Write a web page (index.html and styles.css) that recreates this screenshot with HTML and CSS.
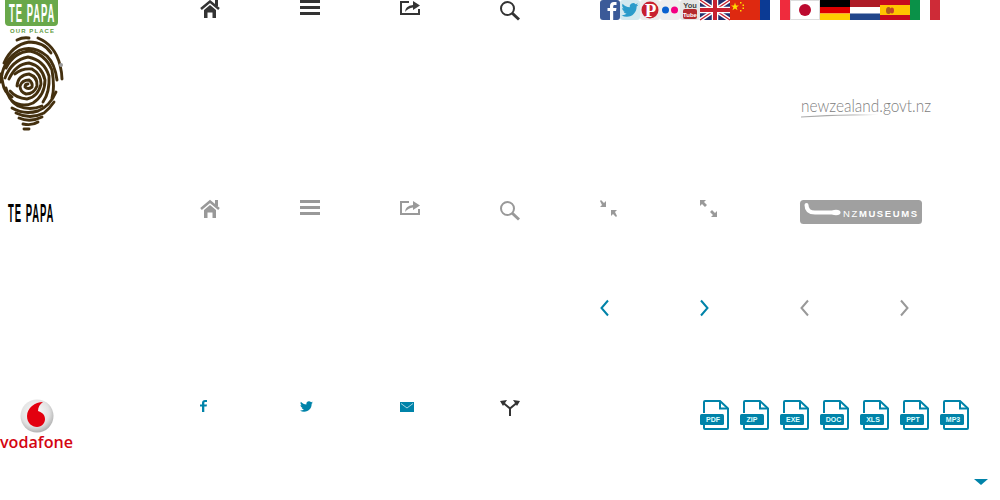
FILE: index.html
```html
<!DOCTYPE html>
<html lang="en">
<head>
<meta charset="utf-8">
<title>Sprite sheet</title>
<link rel="stylesheet" href="styles.css">
</head>
<body>
<main class="sheet">

<svg class="cell c1 r1 tall" viewBox="0 0 100 200">
  <path d="M5 0H58V22Q58 26 54 26H9Q5 26 5 22Z" fill="#69a84a"/>
  <text class="logo-type" transform="translate(9 22) scale(.38 1)" font-size="25" letter-spacing="2.500" fill="#fff">TE PAPA</text>
  <text class="place" x="10" y="33" font-size="6" textLength="44" fill="#5f9c42">OUR PLACE</text>
  <g fill="none" stroke="#44300f" stroke-width="2.900" stroke-linecap="round">
    <path d="M17 40Q23 37 29 38"/>
    <path d="M38 38Q55 45 60 65Q62 73 62 79"/>
    <path d="M4 63Q12 45 29 42Q44 42 51 53"/>
    <path d="M1 82Q2 60 20 50Q34 45 47 56Q55 64 57 80"/>
    <path d="M6 68Q14 52 30 51Q45 54 52 70Q55 88 52 98"/>
    <path d="M5 78Q12 60 28 57Q44 60 49 76Q50 92 43 102"/>
    <path d="M9 79Q16 64 29 63Q42 66 45 80Q45 95 33 103Q22 108 12 101"/>
    <path d="M15 74Q22 68 32 69Q41 74 41 84Q38 97 27 99Q16 98 10 91"/>
    <path d="M17 86Q18 75 29 74Q38 77 37 86Q34 94 26 94Q20 92 20 86Q22 80 29 80Q33 83 32 87Q28 90 25 87Q25 84 28 84"/>
    <path d="M1 74L3 84Q4 92 12 97"/>
    <path d="M6 88Q8 100 18 106Q30 111 42 106"/>
    <path d="M12 108Q24 115 38 111Q50 106 56 92"/>
    <path d="M16 113Q30 120 44 113Q50 108 54 102"/>
    <path d="M19 118Q30 123 42 117"/>
    <path d="M23 124Q32 126 38 122"/>
    <path d="M24 129H29"/>
  </g>
  <circle cx="61" cy="65" r="2" fill="#999"/>
</svg>

<svg class="cell c3 r1" viewBox="200 0 100 100">
  <path d="M201 9L210 1.500L219 9" fill="none" stroke="#333" stroke-width="2.500"/>
  <path d="M215 0H218V6H215Z" fill="#333"/>
  <path d="M204 10L210 5L216 10V18H212.500V12.500H207.500V18H204Z" fill="#333"/>
</svg>
<svg class="cell c4 r1" viewBox="300 0 100 100">
  <path d="M300 0H320V3H300ZM300 6H320V9H300ZM300 12H320V15H300Z" fill="#333"/>
</svg>
<svg class="cell c5 r1" viewBox="400 0 100 100">
  <path d="M409 2H401V14H419V9" fill="none" stroke="#333" stroke-width="2"/>
  <path d="M405 12Q405 6 413 5V1L420 5.500L413 10V7.500Q408 8 405 12Z" fill="#333"/>
</svg>
<svg class="cell c6 r1" viewBox="500 0 100 100">
  <circle cx="507.500" cy="8.500" r="6.500" fill="none" stroke="#333" stroke-width="2"/>
  <path d="M512 13L519 19.500" stroke="#333" stroke-width="3"/>
</svg>

<svg class="cell c7 r1" viewBox="600 0 100 100">
  <rect x="600" y="0" width="20" height="20" rx="3" fill="#3b5a98"/>
  <path d="M610 20V11H607.500V8H610V6C610 3.500 611.500 2 614 2H616.500V5H614.800C613.600 5 613.200 5.500 613.200 6.500V8H616.500L616 11H613.200V20Z" fill="#fff"/>
  <rect x="620" y="0" width="20" height="20" rx="3" fill="#d3e9ef"/>
  <path transform="translate(621.500 1.500) scale(.7)" d="M23.950 4.570a10 10 0 0 1-2.820.770 4.960 4.960 0 0 0 2.160-2.720c-.950.550-2 .950-3.120 1.180a4.920 4.920 0 0 0-8.380 4.480C7.690 8.100 4.070 6.130 1.640 3.160a4.820 4.820 0 0 0-.670 2.480c0 1.710.870 3.210 2.190 4.100a4.900 4.900 0 0 1-2.230-.620v.060c0 2.390 1.700 4.380 3.950 4.830a5 5 0 0 1-2.210.080 4.940 4.940 0 0 0 4.600 3.420A9.870 9.870 0 0 1 0 19.540a14 14 0 0 0 7.560 2.210c9.050 0 14-7.500 14-13.980l-.020-.640a9.940 9.940 0 0 0 2.410-2.560z" fill="#2b9ccb"/>
  <rect x="640" y="0" width="20" height="20" rx="3" fill="#ececec"/>
  <circle cx="650" cy="10" r="8.500" fill="#c8202f"/>
  <text class="pin" x="650.500" y="17" font-size="19" text-anchor="middle" fill="#fff">P</text>
  <rect x="660" y="0" width="20" height="20" rx="3" fill="#efefef"/>
  <circle cx="665.500" cy="10" r="3.500" fill="#0b62d0"/>
  <circle cx="674.500" cy="10" r="3.500" fill="#f40083"/>
  <rect x="680" y="0" width="20" height="20" rx="3" fill="#e6e6e6"/>
  <text class="yt" x="690" y="8" font-size="7.500" text-anchor="middle" fill="#444">You</text>
  <rect x="683" y="9" width="14" height="10" rx="2" fill="#b52a2e"/>
  <text class="yt" x="690" y="16.500" font-size="6" text-anchor="middle" fill="#fff">Tube</text>
</svg>

<svg class="cell c8 r1 wide" viewBox="700 0 300 100">
  <rect x="700" y="0" width="30" height="20" fill="#24306e"/>
  <path d="M700 0L730 20M730 0L700 20" stroke="#fff" stroke-width="4"/>
  <path d="M700 0L730 20M730 0L700 20" stroke="#c8202f" stroke-width="1.300"/>
  <path d="M715 0V20M700 10H730" stroke="#fff" stroke-width="6.500"/>
  <path d="M715 0V20M700 10H730" stroke="#c8202f" stroke-width="4"/>

  <rect x="730" y="0" width="30" height="20" fill="#de2910"/>
  <path d="M735 2.500L736 5.500H739L736.600 7.300L737.500 10.200L735 8.400L732.500 10.200L733.400 7.300L731 5.500H734Z" fill="#ffde00"/>
  <path d="M740 2h1.500v1.500H740ZM742.500 4.500h1.500V6h-1.500ZM742.500 7.500h1.500V9h-1.500ZM740 10h1.500v1.500H740Z" fill="#ffde00"/>

  <rect x="760" y="0" width="10" height="20" fill="#0b3a94"/>
  <rect x="770" y="0" width="10" height="20" fill="#fff"/>
  <rect x="780" y="0" width="10" height="20" fill="#ef2b3d"/>

  <rect x="790.500" y="0.500" width="29" height="19" fill="#fff" stroke="#ddd"/>
  <circle cx="805" cy="10" r="6" fill="#bc0a2f"/>

  <rect x="820" y="0" width="30" height="7" fill="#000"/>
  <rect x="820" y="7" width="30" height="6.500" fill="#dd0000"/>
  <rect x="820" y="13.500" width="30" height="6.500" fill="#ffce00"/>

  <rect x="850" y="0" width="30" height="7" fill="#ae1c28"/>
  <rect x="850" y="7" width="30" height="6.500" fill="#fff"/>
  <rect x="850" y="13.500" width="30" height="6.500" fill="#21468b"/>

  <rect x="880" y="0" width="30" height="20" fill="#c60b1e"/>
  <rect x="880" y="5" width="30" height="10" fill="#ffc400"/>
  <ellipse cx="888.500" cy="10.500" rx="2.500" ry="3.500" fill="#ad5b1f"/>
  <ellipse cx="892" cy="10.500" rx="2" ry="3" fill="#c8402a"/>

  <rect x="910" y="0" width="10" height="20" fill="#0a9148"/>
  <rect x="920" y="0" width="10" height="20" fill="#fff"/>
  <rect x="930" y="0" width="10" height="20" fill="#ce2b37"/>
</svg>

<svg class="cell c9 r2 wide-2" viewBox="800 100 200 100">
  <text class="govt" x="801" y="112" font-size="17.500" textLength="130" lengthAdjust="spacingAndGlyphs" fill="#808080">newzealand.govt.nz</text>
  <path d="M801 116.500Q840 113.500 879 115Q840 114.800 801 117.500Z" fill="#aaa"/>
</svg>

<svg class="cell c1 r3" viewBox="0 200 100 100">
  <text class="logo-type" transform="translate(8 222) scale(.38 1)" font-size="25" letter-spacing="2.500" fill="#000">TE PAPA</text>
</svg>
<svg class="cell c3 r3" viewBox="200 200 100 100">
  <path d="M201 209L210 201.500L219 209" fill="none" stroke="#999" stroke-width="2.500"/>
  <path d="M215 200H218V206H215Z" fill="#999"/>
  <path d="M204 210L210 205L216 210V218H212.500V212.500H207.500V218H204Z" fill="#999"/>
</svg>
<svg class="cell c4 r3" viewBox="300 200 100 100">
  <path d="M300 200H320V203H300ZM300 206H320V209H300ZM300 212H320V215H300Z" fill="#999"/>
</svg>
<svg class="cell c5 r3" viewBox="400 200 100 100">
  <path d="M409 202H401V214H419V209" fill="none" stroke="#999" stroke-width="2"/>
  <path d="M405 212Q405 206 413 205V201L420 205.500L413 210V207.500Q408 208 405 212Z" fill="#999"/>
</svg>
<svg class="cell c6 r3" viewBox="500 200 100 100">
  <circle cx="507.500" cy="208.500" r="6.500" fill="none" stroke="#999" stroke-width="2"/>
  <path d="M512 213L519 219.500" stroke="#999" stroke-width="3"/>
</svg>
<svg class="cell c7 r3" viewBox="600 200 100 100">
  <path d="M600 201L601 200L604 203L606 201V207H600L602 205ZM617 216L616 217L613 214L611 216V210H617L615 212Z" fill="#999"/>
</svg>
<svg class="cell c8 r3" viewBox="700 200 100 100">
  <path d="M700 200H706L704 202L707 205L705 207L702 204L700 206ZM717 217H711L713 215L710 212L712 210L715 213L717 211Z" fill="#999"/>
</svg>
<svg class="cell c9 r3 wide-2" viewBox="800 200 200 100">
  <rect x="800" y="200" width="122" height="24" rx="3.500" fill="#a0a0a0"/>
  <path d="M806.500 205Q806.500 212.500 815 212.500H834" fill="none" stroke="#fff" stroke-width="4" stroke-linecap="round"/>
  <ellipse cx="836" cy="212.500" rx="4.500" ry="2.700" fill="#fff"/>
  <text class="nz" x="843" y="217" font-size="9.500" letter-spacing="1.600" fill="#fff"><tspan class="nz-thin">NZ</tspan>MUSEUMS</text>
</svg>

<svg class="cell c7 r4" viewBox="600 300 100 100">
  <path d="M608 300.500L601.500 308L608 315.500" fill="none" stroke="#0083a9" stroke-width="2"/>
</svg>
<svg class="cell c8 r4" viewBox="700 300 100 100">
  <path d="M701 300.500L707.500 308L701 315.500" fill="none" stroke="#0083a9" stroke-width="2"/>
</svg>
<svg class="cell c9 r4" viewBox="800 300 100 100">
  <path d="M808 300.500L801.500 308L808 315.500" fill="none" stroke="#999" stroke-width="2"/>
</svg>
<svg class="cell c10 r4" viewBox="900 300 100 100">
  <path d="M901 300.500L907.500 308L901 315.500" fill="none" stroke="#999" stroke-width="2"/>
</svg>

<svg class="cell c1 r5" viewBox="0 400 100 100">
  <defs>
    <radialGradient id="vf-ball" cx=".45" cy=".4" r=".65">
      <stop offset="0" stop-color="#fff"/>
      <stop offset=".65" stop-color="#e2e2e2"/>
      <stop offset="1" stop-color="#a5a5a5"/>
    </radialGradient>
  </defs>
  <circle cx="37" cy="416" r="16.500" fill="url(#vf-ball)"/>
  <path d="M43 402C35 402 27 408 27 416C27 423 32 427 37 427C42 427 45 423 45 419C45 414 41 412 38 411C38 407 40 404 43 402Z" fill="#e3000f"/>
  <text class="vf" x="0" y="448" font-size="16.500" textLength="73" lengthAdjust="spacingAndGlyphs" fill="#d40511">vodafone</text>
</svg>
<svg class="cell c3 r5" viewBox="200 400 100 100">
  <path d="M202 412V406.500H200V404.500H202V403C202 401 203.200 400 205 400H207V402H205.500C204.600 402 204.300 402.400 204.300 403V404.500H207L206.600 406.500H204.300V412Z" fill="#0083a9"/>
</svg>
<svg class="cell c4 r5" viewBox="300 400 100 100">
  <path transform="translate(300 400) scale(.54)" d="M23.950 4.570a10 10 0 0 1-2.820.770 4.960 4.960 0 0 0 2.160-2.720c-.950.550-2 .950-3.120 1.180a4.920 4.920 0 0 0-8.380 4.480C7.690 8.100 4.070 6.130 1.640 3.160a4.820 4.820 0 0 0-.670 2.480c0 1.710.870 3.210 2.190 4.100a4.900 4.900 0 0 1-2.230-.620v.060c0 2.390 1.700 4.380 3.950 4.830a5 5 0 0 1-2.210.080 4.940 4.940 0 0 0 4.600 3.420A9.870 9.870 0 0 1 0 19.540a14 14 0 0 0 7.560 2.210c9.050 0 14-7.500 14-13.980l-.020-.640a9.940 9.940 0 0 0 2.410-2.560z" fill="#0083a9"/>
</svg>
<svg class="cell c5 r5" viewBox="400 400 100 100">
  <rect x="400" y="402" width="14" height="10" fill="#0083a9"/>
  <path d="M401 403.500L407 408L413 403.500" fill="none" stroke="#cfe8f0" stroke-width=".8"/>
</svg>
<svg class="cell c6 r5" viewBox="500 400 100 100">
  <path d="M510 416V408.500L504 403.500M510 408.500L516 403.500" fill="none" stroke="#333" stroke-width="2"/>
  <path d="M500 401L507 400L503 406ZM520 401L513 400L517 406Z" fill="#333"/>
</svg>

<svg class="cell c8 r5 wide" viewBox="700 400 300 100">
  <g class="file"><path d="M704 413V402Q704 401 705 401H720L728 408.500V428Q728 429 727 429H705Q704 429 704 428V425" fill="none" stroke="#0083a9" stroke-width="2"/><path d="M720 401V408.500H728" fill="none" stroke="#0083a9" stroke-width="2"/><rect x="700" y="414" width="24" height="11" rx="1.500" fill="#0083a9"/><text class="ft" x="713" y="422" font-size="7" text-anchor="middle" fill="#dff">PDF</text></g>
  <g class="file"><path d="M744 413V402Q744 401 745 401H760L768 408.500V428Q768 429 767 429H745Q744 429 744 428V425" fill="none" stroke="#0083a9" stroke-width="2"/><path d="M760 401V408.500H768" fill="none" stroke="#0083a9" stroke-width="2"/><rect x="740" y="414" width="24" height="11" rx="1.500" fill="#0083a9"/><text class="ft" x="752" y="422" font-size="7" text-anchor="middle" fill="#dff">ZIP</text></g>
  <g class="file"><path d="M784 413V402Q784 401 785 401H800L808 408.500V428Q808 429 807 429H785Q784 429 784 428V425" fill="none" stroke="#0083a9" stroke-width="2"/><path d="M800 401V408.500H808" fill="none" stroke="#0083a9" stroke-width="2"/><rect x="780" y="414" width="24" height="11" rx="1.500" fill="#0083a9"/><text class="ft" x="793" y="422" font-size="7" text-anchor="middle" fill="#dff">EXE</text></g>
  <g class="file"><path d="M824 413V402Q824 401 825 401H840L848 408.500V428Q848 429 847 429H825Q824 429 824 428V425" fill="none" stroke="#0083a9" stroke-width="2"/><path d="M840 401V408.500H848" fill="none" stroke="#0083a9" stroke-width="2"/><rect x="820" y="414" width="24" height="11" rx="1.500" fill="#0083a9"/><text class="ft" x="833.500" y="422" font-size="7" text-anchor="middle" fill="#dff">DOC</text></g>
  <g class="file"><path d="M864 413V402Q864 401 865 401H880L888 408.500V428Q888 429 887 429H865Q864 429 864 428V425" fill="none" stroke="#0083a9" stroke-width="2"/><path d="M880 401V408.500H888" fill="none" stroke="#0083a9" stroke-width="2"/><rect x="860" y="414" width="24" height="11" rx="1.500" fill="#0083a9"/><text class="ft" x="873" y="422" font-size="7" text-anchor="middle" fill="#dff">XLS</text></g>
  <g class="file"><path d="M904 413V402Q904 401 905 401H920L928 408.500V428Q928 429 927 429H905Q904 429 904 428V425" fill="none" stroke="#0083a9" stroke-width="2"/><path d="M920 401V408.500H928" fill="none" stroke="#0083a9" stroke-width="2"/><rect x="900" y="414" width="24" height="11" rx="1.500" fill="#0083a9"/><text class="ft" x="913" y="422" font-size="7" text-anchor="middle" fill="#dff">PPT</text></g>
  <g class="file"><path d="M944 413V402Q944 401 945 401H960L968 408.500V428Q968 429 967 429H945Q944 429 944 428V425" fill="none" stroke="#0083a9" stroke-width="2"/><path d="M960 401V408.500H968" fill="none" stroke="#0083a9" stroke-width="2"/><rect x="940" y="414" width="24" height="11" rx="1.500" fill="#0083a9"/><text class="ft" x="953" y="422" font-size="7" text-anchor="middle" fill="#dff">MP3</text></g>
  <path d="M974 479H988L981 485Z" fill="#0083a9"/>
</svg>

</main>
</body>
</html>
```
FILE: styles.css
```css
html, body {
  margin: 0;
  padding: 0;
  background: #fff;
}

.sheet {
  display: grid;
  grid-template-columns: repeat(10, 100px);
  grid-template-rows: repeat(5, 100px);
  width: 1000px;
  height: 500px;
  overflow: hidden;
}

.cell { display: block; width: 100%; height: 100%; overflow: visible; }

.c1 { grid-column-start: 1; }
.c3 { grid-column-start: 3; }
.c4 { grid-column-start: 4; }
.c5 { grid-column-start: 5; }
.c6 { grid-column-start: 6; }
.c7 { grid-column-start: 7; }
.c8 { grid-column-start: 8; }
.c9 { grid-column-start: 9; }
.c10 { grid-column-start: 10; }

.r1 { grid-row-start: 1; }
.r2 { grid-row-start: 2; }
.r3 { grid-row-start: 3; }
.r4 { grid-row-start: 4; }
.r5 { grid-row-start: 5; }

.tall { grid-row-end: span 2; }
.wide { grid-column-end: span 3; }
.wide-2 { grid-column-end: span 2; }

text { font-family: "Liberation Sans", Arial, sans-serif; }

.logo-type { font-weight: 700; }
.place { font-weight: 700; }
.pin { font-family: "Liberation Serif", serif; font-weight: 700; }
.yt { font-weight: 700; }
.govt { font-family: "Lato", sans-serif; font-weight: 300; }
.nz { font-weight: 700; }
.nz-thin { font-weight: 400; }
.vf { font-family: "Open Sans", sans-serif; font-weight: 600; }
.ft { font-weight: 700; }
```
